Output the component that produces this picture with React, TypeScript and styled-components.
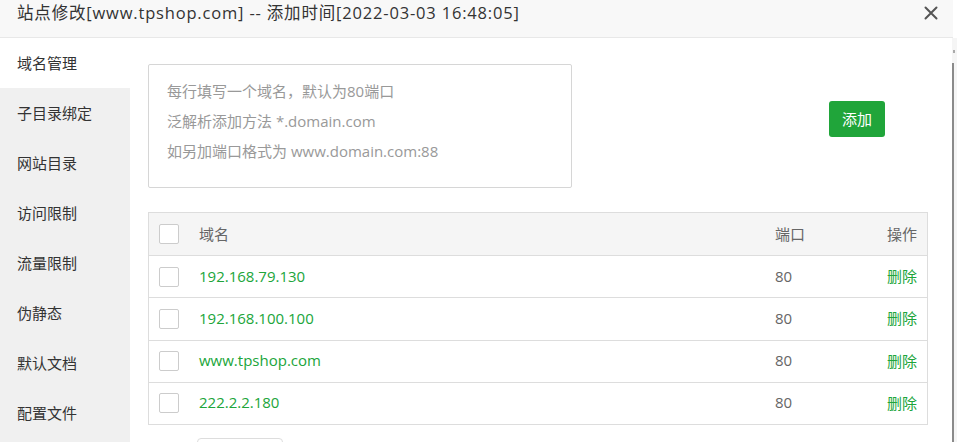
import React from "react";
import styled, { createGlobalStyle } from "styled-components";

const GlobalStyle = createGlobalStyle`
  html, body { margin: 0; padding: 0; background: #fff; }
  body {
    font-family: "Open Sans", "Noto Sans CJK SC", sans-serif;
    color: #333;
  }
  * { box-sizing: border-box; }
`;

const Dialog = styled.div`
  width: 957px;
  height: 442px;
  display: flex;
  flex-direction: column;
  overflow: hidden;
  background: #fff;
`;

const Header = styled.div`
  height: 38px;
  flex: none;
  display: flex;
  align-items: center;
  justify-content: space-between;
  padding: 0 14px 0 17px;
  margin-right: 4px;
  background: #f8f8f8;
  border-bottom: 1px solid #e8e8e8;
`;

const Title = styled.div`
  font-size: 16.5px;
  letter-spacing: 0.82px;
  color: #333;
  white-space: nowrap;
  line-height: 26px;
  margin-top: -12px;
`;

const Close = styled.button`
  border: 0;
  background: none;
  padding: 0;
  width: 16px;
  height: 16px;
  margin-top: -12px;
  display: flex;
  align-items: center;
  justify-content: center;
  color: #555;
`;

const Body = styled.div`
  flex: 1;
  display: flex;
  min-height: 0;
`;

const Sidebar = styled.div`
  width: 130px;
  flex: none;
  background: #f0f0f0;
  display: flex;
  flex-direction: column;
`;

const NavItem = styled.div<{ $active?: boolean }>`
  height: 50px;
  flex: none;
  display: flex;
  align-items: center;
  padding-left: 17px;
  padding-bottom: 2px;
  font-size: 15px;
  color: #333;
  background: ${(p) => (p.$active ? "#fff" : "transparent")};
`;

const Main = styled.div`
  flex: 1;
  padding: 26px 24px 0 18px;
  display: flex;
  flex-direction: column;
  min-width: 0;
`;

const AddRow = styled.div`
  display: flex;
  align-items: flex-start;
`;

const TextArea = styled.div`
  width: 424px;
  height: 124px;
  border: 1px solid #d6d6d6;
  border-radius: 2px;
  padding: 11px 18px;
`;

const Hint = styled.div`
  font-size: 15px;
  line-height: 30px;
  color: #999;
  white-space: nowrap;
`;

const AddButton = styled.button`
  margin: 37px 0 0 257px;
  width: 56px;
  height: 36px;
  border: 0;
  border-radius: 3px;
  background: #20a53a;
  color: #fff;
  font-family: inherit;
  font-size: 15px;
  padding: 0 0 2px;
`;

const Table = styled.div`
  margin-top: 24px;
  border: 1px solid #ddd;
  display: flex;
  flex-direction: column;
`;

const Row = styled.div<{ $head?: boolean }>`
  height: ${(p) => (p.$head ? "42px" : "42.25px")};
  display: flex;
  align-items: center;
  padding: 0 10px 2px;
  background: ${(p) => (p.$head ? "#f5f5f5" : "#fff")};
  border-top: ${(p) => (p.$head ? "0" : "1px solid #ddd")};
  font-size: 15px;
  color: #666;
`;

const Check = styled.span`
  width: 20px;
  height: 20px;
  border: 1px solid #ccc;
  border-radius: 2px;
  background: #fff;
  flex: none;
  margin: 2px 20px 0 0;
`;

const DomainCell = styled.span<{ $link?: boolean }>`
  flex: 1;
  color: ${(p) => (p.$link ? "#20a53a" : "#666")};
`;

const PortCell = styled.span`
  width: 112px;
  flex: none;
`;

const OpCell = styled.span<{ $link?: boolean }>`
  width: 30px;
  flex: none;
  text-align: right;
  color: ${(p) => (p.$link ? "#20a53a" : "#666")};
  white-space: nowrap;
`;

const Pager = styled.div`
  margin: 13px 0 0 49px;
  width: 86px;
  height: 30px;
  border: 1px solid #ddd;
  border-radius: 4px;
  flex: none;
`;

const Scrollbar = styled.div`
  width: 5px;
  flex: none;
  background: #f5f5f5;
  position: relative;
  &::before {
    content: "";
    position: absolute;
    left: 1px;
    top: 12px;
    width: 2px;
    height: 3px;
    background: #aaa;
  }
  &::after {
    content: "";
    position: absolute;
    left: 0;
    top: 25px;
    bottom: 0;
    width: 2px;
    background: #8a8a8a;
  }
`;

const navItems = [
  "域名管理",
  "子目录绑定",
  "网站目录",
  "访问限制",
  "流量限制",
  "伪静态",
  "默认文档",
  "配置文件",
];

const domains = [
  { name: "192.168.79.130", port: 80 },
  { name: "192.168.100.100", port: 80 },
  { name: "www.tpshop.com", port: 80 },
  { name: "222.2.2.180", port: 80 },
];

export default function App() {
  return (
    <>
      <GlobalStyle />
      <Dialog>
        <Header>
          <Title>站点修改[www.tpshop.com] -- 添加时间[2022-03-03 16:48:05]</Title>
          <Close aria-label="close">
            <svg width="14" height="14" viewBox="0 0 14 14">
              <path d="M1.5 1.5 L12.5 12.5 M12.5 1.5 L1.5 12.5" stroke="#555" strokeWidth="2" strokeLinecap="round" />
            </svg>
          </Close>
        </Header>
        <Body>
          <Sidebar>
            {navItems.map((n, i) => (
              <NavItem key={n} $active={i === 0}>
                {n}
              </NavItem>
            ))}
          </Sidebar>
          <Main>
            <AddRow>
              <TextArea>
                <Hint>每行填写一个域名，默认为80端口</Hint>
                <Hint>泛解析添加方法 *.domain.com</Hint>
                <Hint>如另加端口格式为 www.domain.com:88</Hint>
              </TextArea>
              <AddButton>添加</AddButton>
            </AddRow>
            <Table>
              <Row $head>
                <Check />
                <DomainCell>域名</DomainCell>
                <PortCell>端口</PortCell>
                <OpCell>操作</OpCell>
              </Row>
              {domains.map((d) => (
                <Row key={d.name}>
                  <Check />
                  <DomainCell $link>{d.name}</DomainCell>
                  <PortCell>{d.port}</PortCell>
                  <OpCell $link>删除</OpCell>
                </Row>
              ))}
            </Table>
            <Pager />
          </Main>
          <Scrollbar />
        </Body>
      </Dialog>
    </>
  );
}
